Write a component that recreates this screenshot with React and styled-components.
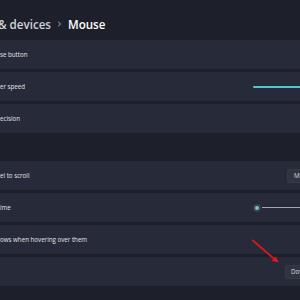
import styled, { createGlobalStyle } from "styled-components";

const GlobalStyle = createGlobalStyle`
  body {
    margin: 0;
    background-color: #1d202b;
    font-family: "Open Sans", "Noto Sans", sans-serif;
    overflow: hidden;
  }
`;

export default function App() {
  return (
    <Page>
      <GlobalStyle />
      <Header>
        <Crumb>&amp; devices</Crumb>
        <Chevron width="5" height="6" viewBox="0 0 5 6">
          <path d="M1.2 0.8 L3.6 3 L1.2 5.2" fill="none" stroke="#b9bbc2" strokeWidth="0.9" />
        </Chevron>
        <Current>Mouse</Current>
      </Header>

      <Group>
        <Card>
          <Label>se button</Label>
        </Card>
        <Card>
          <Label>er speed</Label>
          <FillTrack />
        </Card>
        <Card>
          <Label>ecision</Label>
        </Card>
      </Group>

      <Group $top={28}>
        <Card>
          <Label>el to scroll</Label>
          <Dropdown>Multiple lines at a time</Dropdown>
        </Card>
        <Card>
          <Label>ime</Label>
          <Slider>
            <Thumb />
            <Track />
          </Slider>
        </Card>
        <Card>
          <Label>ows when hovering over them</Label>
        </Card>
        <Card>
          <Label></Label>
          <Button>Download</Button>
        </Card>
      </Group>

      <Arrow width="300" height="300" viewBox="0 0 300 300">
        <line x1="252.3" y1="240" x2="274.5" y2="259.2" stroke="#e5161b" strokeWidth="1.7" />
        <polygon points="278.6,262.6 271.8,260.8 275.7,256.3" fill="#e5161b" />
      </Arrow>
    </Page>
  );
}

const Page = styled.div`
  position: relative;
  width: 300px;
  height: 300px;
  overflow: hidden;
  background-color: #1d202b;
`;

const Header = styled.div`
  height: 40px;
  box-sizing: border-box;
  padding-top: 8px;
  display: flex;
  align-items: center;
  font-size: 11.6px;
  font-weight: 600;
`;

const Crumb = styled.span`
  color: #cfd1d8;
  margin-left: -2px;
`;

const Chevron = styled.svg`
  margin: 0 6px 0 6px;
`;

const Current = styled.span`
  color: #ffffff;
`;

const Group = styled.div`
  width: 380px;
  margin-top: ${(p) => (p.$top ? p.$top + "px" : "0")};
  display: flex;
  flex-direction: column;
  gap: 3px;
`;

const Card = styled.div`
  height: 29px;
  box-sizing: border-box;
  padding-right: 20px;
  display: flex;
  align-items: center;
  justify-content: space-between;
  background-color: #272b39;
`;

const Label = styled.span`
  font-size: 6.2px;
  color: #e2e3e7;
  white-space: nowrap;
`;

const FillTrack = styled.div`
  width: 107px;
  height: 2px;
  border-radius: 1px;
  background-color: #55c4cb;
`;

const Slider = styled.div`
  width: 107px;
  display: flex;
  align-items: center;
`;

const Thumb = styled.div`
  width: 8px;
  height: 8px;
  border-radius: 50%;
  background-color: #3c404c;
  display: flex;
  align-items: center;
  justify-content: center;

  &::after {
    content: "";
    width: 4px;
    height: 4px;
    border-radius: 50%;
    background-color: #5fd0d6;
  }
`;

const Track = styled.div`
  flex: 1;
  height: 1.5px;
  margin-left: 1px;
  background-color: #a2a5ad;
`;

const Dropdown = styled.div`
  width: 73px;
  height: 14px;
  box-sizing: border-box;
  padding-left: 6px;
  display: flex;
  align-items: center;
  border-radius: 2.5px;
  background-color: #30343f;
  border: 1px solid #363a47;
  font-size: 6.2px;
  color: #dcdde2;
  white-space: nowrap;
  overflow: hidden;
`;

const Button = styled.div`
  width: 75px;
  height: 14px;
  box-sizing: border-box;
  padding-left: 5px;
  display: flex;
  align-items: center;
  border-radius: 2.5px;
  background-color: #30343f;
  border: 1px solid #363a47;
  font-size: 6.2px;
  color: #dcdde2;
  white-space: nowrap;
  overflow: hidden;
`;

const Arrow = styled.svg`
  position: absolute;
  left: 0;
  top: 0;
  pointer-events: none;
`;
